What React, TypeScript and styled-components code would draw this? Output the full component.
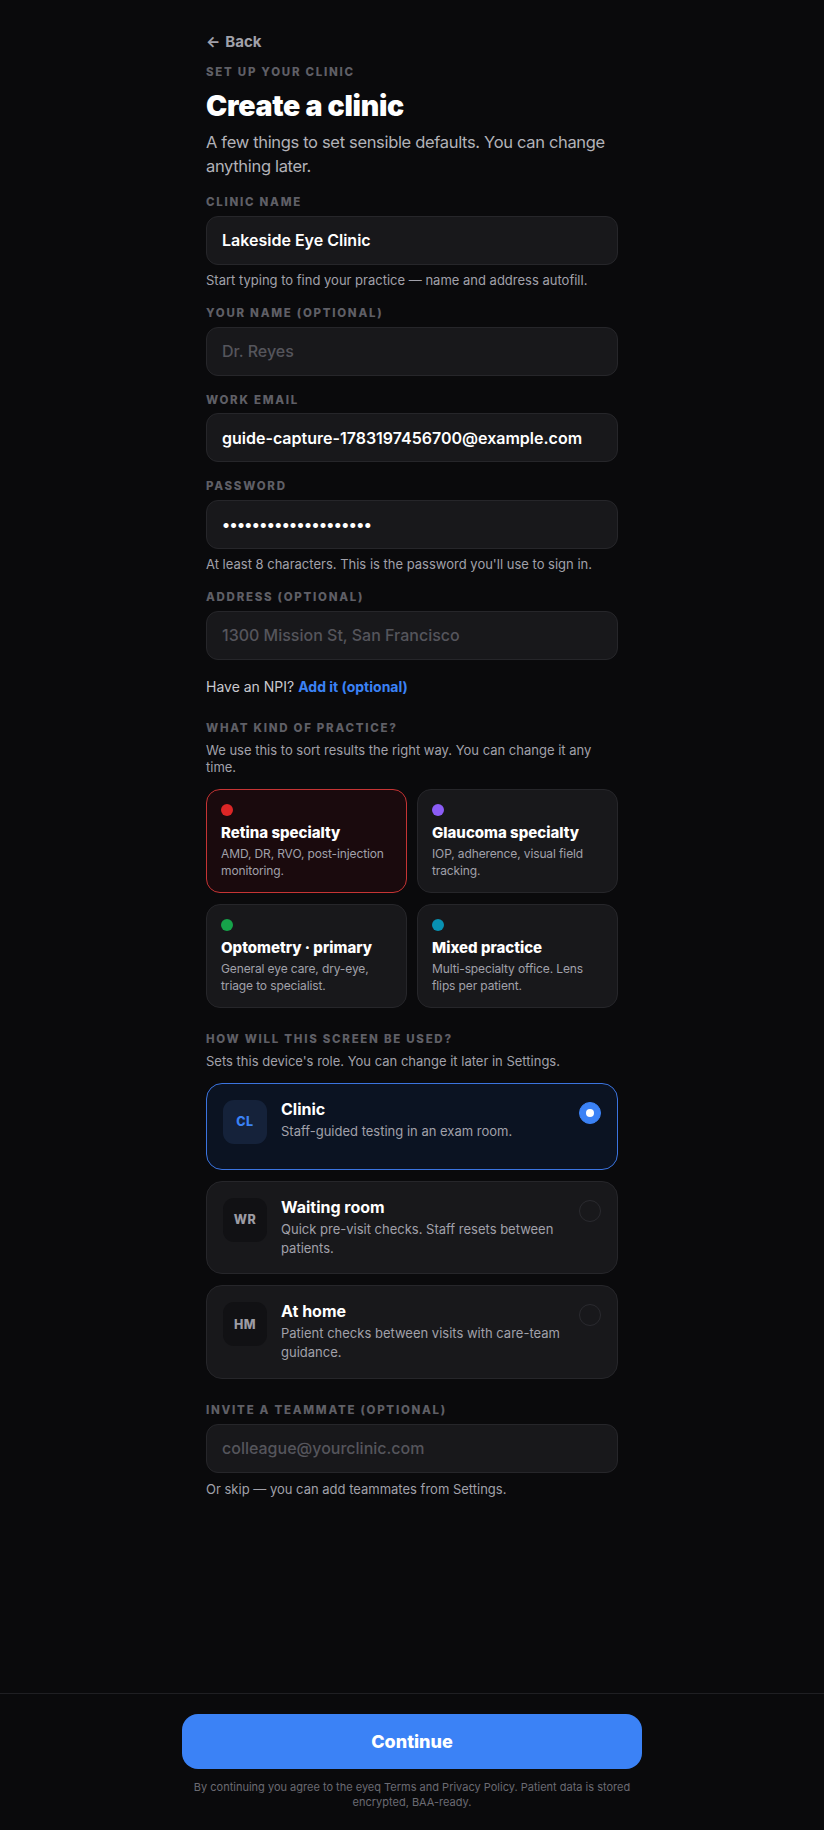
import React, { useState } from 'react';
import styled, { createGlobalStyle, css } from 'styled-components';

const palette = {
	bg: '#0a0a0c',
	field: '#18181b',
	fieldBorder: '#26262a',
	label: '#5f5f66',
	muted: '#a1a1aa',
	sub: '#b2b2b9',
	placeholder: '#55555c',
	blue: '#3b82f6',
	faint: '#6b6b73',
};

const GlobalStyle = createGlobalStyle`
	* { box-sizing: border-box; }
	html, body { margin: 0; padding: 0; background: ${palette.bg}; }
	body {
		font-family: Inter, 'Noto Sans', 'Liberation Sans', sans-serif;
		color: #fff;
		-webkit-font-smoothing: antialiased;
	}
	input, button { font-family: inherit; }
`;

const practices = [
	{ id: 'retina', dot: '#dc2626', title: 'Retina specialty', text: 'AMD, DR, RVO, post-injection monitoring.' },
	{ id: 'glaucoma', dot: '#8b5cf6', title: 'Glaucoma specialty', text: 'IOP, adherence, visual field tracking.' },
	{ id: 'optometry', dot: '#16a34a', title: 'Optometry · primary', text: 'General eye care, dry-eye, triage to specialist.' },
	{ id: 'mixed', dot: '#0891b2', title: 'Mixed practice', text: 'Multi-specialty office. Lens flips per patient.' },
];

const roles = [
	{ id: 'clinic', code: 'CL', title: 'Clinic', text: 'Staff-guided testing in an exam room.' },
	{ id: 'waiting', code: 'WR', title: 'Waiting room', text: 'Quick pre-visit checks. Staff resets between patients.' },
	{ id: 'home', code: 'HM', title: 'At home', text: 'Patient checks between visits with care-team guidance.' },
];

export default function App() {
	const [practice, setPractice] = useState('retina');
	const [role, setRole] = useState('clinic');

	return (
		<>
			<GlobalStyle />
			<Page>
				<Main>
					<Back type="button">
						<span>←</span> Back
					</Back>
					<Eyebrow>Set up your clinic</Eyebrow>
					<Title>Create a clinic</Title>
					<Subtitle>
						A few things to set sensible defaults. You can change anything later.
					</Subtitle>

					<Field>
						<Label>Clinic name</Label>
						<Input defaultValue="Lakeside Eye Clinic" />
						<Help>Start typing to find your practice — name and address autofill.</Help>
					</Field>
					<Field>
						<Label>Your name (optional)</Label>
						<Input placeholder="Dr. Reyes" />
					</Field>
					<Field>
						<Label>Work email</Label>
						<Input type="email" defaultValue="guide-capture-1783197456700@example.com" />
					</Field>
					<Field>
						<Label>Password</Label>
						<Input type="password" defaultValue="lakeside-eye-clinic1" $secret />
						<Help>At least 8 characters. This is the password you'll use to sign in.</Help>
					</Field>
					<Field>
						<Label>Address (optional)</Label>
						<Input placeholder="1300 Mission St, San Francisco" />
					</Field>
					<Npi>
						Have an NPI? <LinkButton type="button">Add it (optional)</LinkButton>
					</Npi>

					<Section>
						<Label>What kind of practice?</Label>
						<SectionText>We use this to sort results the right way. You can change it any time.</SectionText>
						<PracticeGrid>
							{practices.map((p) => (
								<PracticeCard
									key={p.id}
									type="button"
									$active={practice === p.id}
									onClick={() => setPractice(p.id)}
								>
									<Dot $color={p.dot} />
									<CardTitle>{p.title}</CardTitle>
									<CardText>{p.text}</CardText>
								</PracticeCard>
							))}
						</PracticeGrid>
					</Section>

					<Section>
						<Label>How will this screen be used?</Label>
						<SectionText>Sets this device's role. You can change it later in Settings.</SectionText>
						<RoleList>
							{roles.map((r) => {
								const active = role === r.id;
								return (
									<RoleCard key={r.id} type="button" $active={active} onClick={() => setRole(r.id)}>
										<RoleBadge $active={active}>{r.code}</RoleBadge>
										<RoleBody>
											<RoleTitle>{r.title}</RoleTitle>
											<RoleText>{r.text}</RoleText>
										</RoleBody>
										<Radio $active={active} />
									</RoleCard>
								);
							})}
						</RoleList>
					</Section>

					<Section>
						<Label>Invite a teammate (optional)</Label>
						<Input type="email" placeholder="colleague@yourclinic.com" />
						<Help>Or skip — you can add teammates from Settings.</Help>
					</Section>
				</Main>

				<Footer>
					<FooterInner>
						<Continue type="button">Continue</Continue>
						<Fine>
							By continuing you agree to the eyeq Terms and Privacy Policy. Patient data is stored
							encrypted, BAA-ready.
						</Fine>
					</FooterInner>
				</Footer>
			</Page>
		</>
	);
}

const Page = styled.div`
	display: flex;
	flex-direction: column;
	min-height: 100vh;
	background: ${palette.bg};
`;
const Main = styled.main`
	flex: 1;
	display: flex;
	flex-direction: column;
	width: 412px;
	margin: 0 auto;
	padding: 32px 0 40px;
`;
const Back = styled.button`
	align-self: flex-start;
	display: flex;
	align-items: center;
	gap: 5px;
	padding: 0;
	border: none;
	background: none;
	color: ${palette.muted};
	font-size: 15px;
	font-weight: 700;
	line-height: 20px;
	cursor: pointer;
	span {
		font-size: 15px;
	}
`;
const Label = styled.div`
	color: ${palette.label};
	font-size: 11.5px;
	font-weight: 800;
	line-height: 14px;
	letter-spacing: 0.15em;
	text-transform: uppercase;
`;
const Eyebrow = styled(Label)`
	margin-top: 13px;
`;
const Title = styled.h1`
	margin: 10px 0 0;
	font-size: 28.5px;
	font-weight: 900;
	line-height: 34px;
	letter-spacing: -0.01em;
`;
const Subtitle = styled.p`
	margin: 8px 0 0;
	color: ${palette.sub};
	font-size: 16.5px;
	line-height: 23.5px;
	letter-spacing: -0.02em;
`;
const Field = styled.div`
	display: flex;
	flex-direction: column;
	gap: 6.5px;
	margin-top: 17px;
`;
const Input = styled.input<{ $secret?: boolean }>`
	width: 100%;
	height: 49px;
	padding: 0 15px;
	border: 1px solid ${palette.fieldBorder};
	border-radius: 12px;
	background: ${palette.field};
	color: #fff;
	font-size: 16px;
	font-weight: 600;
	outline: none;
	${(p) =>
		p.$secret &&
		css`
			letter-spacing: -0.6px;
		`}
	&::placeholder {
		color: ${palette.placeholder};
		font-weight: 500;
		letter-spacing: 0;
	}
`;
const Help = styled.div`
	color: ${palette.muted};
	font-size: 13px;
	line-height: 18px;
`;
const Npi = styled.div`
	margin-top: 17px;
	color: #c9c9cf;
	font-size: 14px;
	line-height: 20px;
`;
const LinkButton = styled.button`
	padding: 0;
	border: none;
	background: none;
	color: ${palette.blue};
	font-size: 14px;
	font-weight: 700;
	cursor: pointer;
`;
const Section = styled.section`
	display: flex;
	flex-direction: column;
	gap: 7px;
	margin-top: 24px;
`;
const SectionText = styled.p`
	margin: 0 0 5px;
	max-width: 400px;
	color: ${palette.muted};
	font-size: 13px;
	line-height: 17.8px;
`;
const PracticeGrid = styled.div`
	display: grid;
	grid-template-columns: 1fr 1fr;
	gap: 11px 10px;
`;
const PracticeCard = styled.button<{ $active: boolean }>`
	display: flex;
	flex-direction: column;
	align-items: flex-start;
	height: 104px;
	padding: 14px 14px 12px;
	border: 1px solid ${(p) => (p.$active ? '#c53434' : palette.fieldBorder)};
	border-radius: 14px;
	background: ${(p) => (p.$active ? '#1a0a0d' : palette.field)};
	color: #fff;
	text-align: left;
	cursor: pointer;
`;
const Dot = styled.span<{ $color: string }>`
	width: 12px;
	height: 12px;
	border-radius: 50%;
	background: ${(p) => p.$color};
`;
const CardTitle = styled.div`
	margin-top: 7px;
	font-size: 15px;
	font-weight: 800;
	line-height: 20px;
`;
const CardText = styled.div`
	margin-top: 2px;
	color: ${palette.muted};
	font-size: 12px;
	line-height: 17.3px;
	letter-spacing: -0.01em;
`;
const RoleList = styled.div`
	display: flex;
	flex-direction: column;
	gap: 11px;
`;
const RoleCard = styled.button<{ $active: boolean }>`
	display: flex;
	align-items: flex-start;
	gap: 14px;
	min-height: 87px;
	padding: 16px;
	border: 1px solid ${(p) => (p.$active ? '#3b74e0' : palette.fieldBorder)};
	border-radius: 16px;
	background: ${(p) => (p.$active ? '#0b1322' : palette.field)};
	color: #fff;
	text-align: left;
	cursor: pointer;
`;
const RoleBadge = styled.div<{ $active: boolean }>`
	display: flex;
	flex: none;
	align-items: center;
	justify-content: center;
	width: 44px;
	height: 44px;
	border-radius: 11px;
	background: ${(p) => (p.$active ? '#15223a' : '#111114')};
	color: ${(p) => (p.$active ? palette.blue : '#9c9ca4')};
	font-size: 12.5px;
	font-weight: 800;
	letter-spacing: 0.04em;
`;
const RoleBody = styled.div`
	flex: 1;
	min-width: 0;
`;
const RoleTitle = styled.div`
	font-size: 16px;
	font-weight: 700;
	line-height: 19.2px;
`;
const RoleText = styled.div`
	margin-top: 3px;
	color: ${palette.muted};
	font-size: 13px;
	line-height: 18.6px;
`;
const Radio = styled.span<{ $active: boolean }>`
	display: flex;
	flex: none;
	align-items: center;
	justify-content: center;
	width: 22px;
	height: 22px;
	margin-top: 2px;
	border-radius: 50%;
	border: 1.5px solid ${(p) => (p.$active ? palette.blue : '#2a2a2f')};
	background: ${(p) => (p.$active ? palette.blue : 'transparent')};
	&::after {
		content: '';
		width: 8px;
		height: 8px;
		border-radius: 50%;
		background: #fff;
		display: ${(p) => (p.$active ? 'block' : 'none')};
	}
`;
const Footer = styled.footer`
	border-top: 1px solid #1f1f23;
	padding: 20px 0 19px;
`;
const FooterInner = styled.div`
	display: flex;
	flex-direction: column;
	align-items: center;
	gap: 11px;
	width: 460px;
	margin: 0 auto;
`;
const Continue = styled.button`
	width: 100%;
	height: 55px;
	border: none;
	border-radius: 16px;
	background: ${palette.blue};
	color: #fff;
	font-size: 18px;
	font-weight: 800;
	cursor: pointer;
`;
const Fine = styled.p`
	margin: 0;
	color: ${palette.faint};
	font-size: 11px;
	line-height: 15.6px;
	text-align: center;
`;
